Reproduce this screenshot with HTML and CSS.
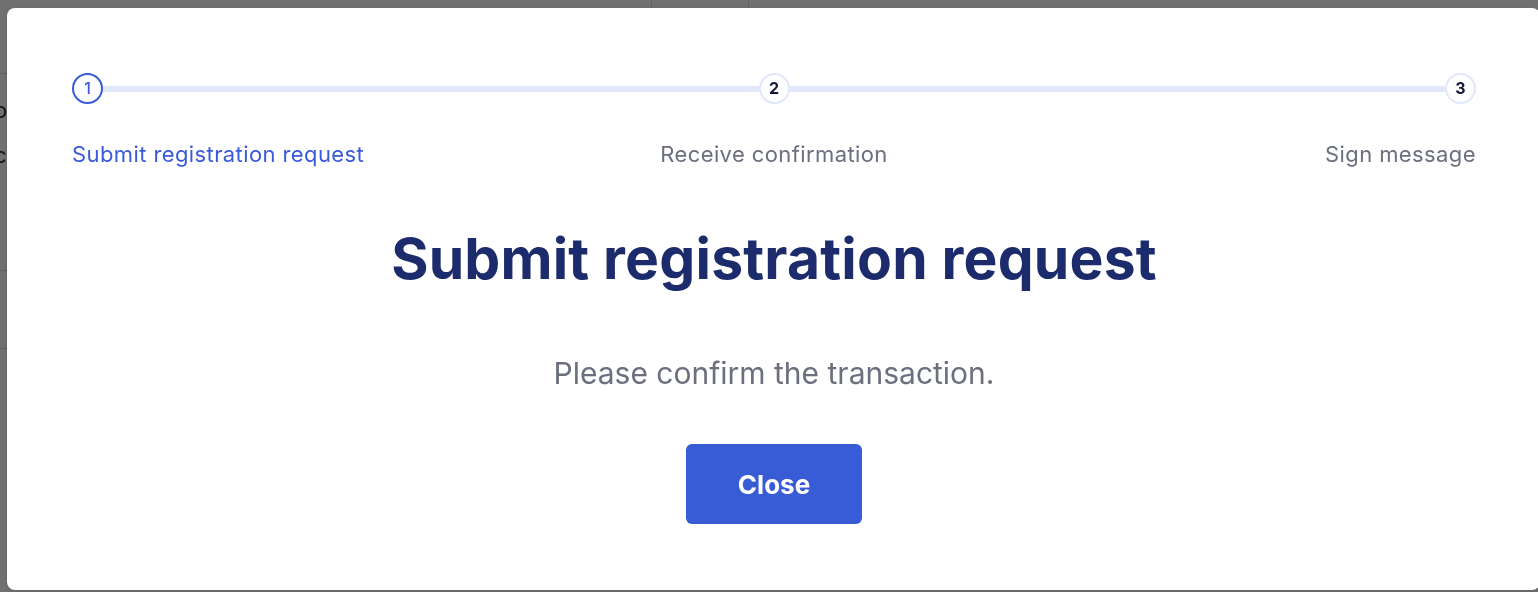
FILE: index.html
```html
<!DOCTYPE html>
<html lang="en">
<head>
    <meta charset="UTF-8">
    <meta name="viewport" content="width=device-width, initial-scale=1.0">
    <title>Register</title>
    <link rel="stylesheet" href="styles.css">
</head>
<body>

    <!-- Halaman di belakang overlay -->
    <div class="page">
        <div class="page-top">
            <span class="page-col"></span>
            <span class="page-col"></span>
        </div>
        <div class="page-row row-1">
            <span class="ghost">o</span>
            <span class="ghost">c</span>
        </div>
        <div class="page-row row-2"></div>
    </div>

    <div class="overlay"></div>

    <!-- Modal registrasi -->
    <div class="modal">
        <div class="stepper">
            <div class="track">
                <div class="step step-active">1</div>
                <div class="step">2</div>
                <div class="step">3</div>
            </div>
            <div class="labels">
                <span class="label label-active">Submit registration request</span>
                <span class="label">Receive confirmation</span>
                <span class="label">Sign message</span>
            </div>
        </div>

        <h1>Submit registration request</h1>
        <p class="info">Please confirm the transaction.</p>
        <button type="button" class="btn-close">Close</button>
    </div>

</body>
</html>
```

FILE: styles.css
```css
body {
    font-family: "Inter", "Noto Sans", sans-serif;
    margin: 0;
    padding: 0;
    background-color: #fff;
    overflow: hidden;
    height: 592px;
}

/* Halaman di belakang */
.page {
    height: 592px;
}

.page-top {
    display: flex;
    height: 73px;
    border-bottom: 1px solid #d8d8d8;
    padding-left: 651px;
}

.page-col {
    width: 96px;
    border-left: 1px solid #ddd;
}

.page-row {
    border-bottom: 1px solid #d8d8d8;
    font-size: 22px;
    color: #333;
}

.row-1 {
    height: 197px;
    padding-top: 14px;
    box-sizing: border-box;
}

.row-2 {
    height: 77px;
}

.ghost {
    display: block;
    margin-left: -6px;
    line-height: 45px;
}

.overlay {
    position: fixed;
    inset: 0;
    background-color: rgba(0, 0, 0, 0.56);
}

/* Modal */
.modal {
    position: fixed;
    top: 8px;
    left: 7px;
    width: 1533px;
    height: 582px;
    box-sizing: border-box;
    background-color: #fff;
    border-radius: 8px;
    padding: 65px 64px 0 65px;
    text-align: center;
    box-shadow: 0 1px 4px rgba(0, 0, 0, 0.15);
}

.track {
    position: relative;
    display: flex;
    justify-content: space-between;
    align-items: center;
    height: 31px;
}

.track::before {
    content: "";
    position: absolute;
    left: 16px;
    right: 16px;
    top: 13px;
    height: 6px;
    background-color: #e1e8fc;
}

.step {
    position: relative;
    width: 27px;
    height: 27px;
    border: 2px solid #e1e8fc;
    border-radius: 50%;
    background-color: #fff;
    color: #121a3a;
    font-size: 16px;
    font-weight: 700;
    line-height: 27px;
    text-align: center;
}

.step-active {
    border-color: #3a5bd9;
    color: #3a5bd9;
    font-weight: 500;
}

/* Label langkah: kiri, tengah, kanan */
.labels {
    display: grid;
    grid-template-columns: 1fr auto 1fr;
    margin-top: 36px;
}

.label {
    font-size: 22px;
    letter-spacing: 0.4px;
    color: #6b6f7e;
    line-height: 28px;
    white-space: nowrap;
}

.label:first-child {
    text-align: left;
}

.label:last-child {
    text-align: right;
}

.label-active {
    color: #3a5bd9;
}

h1 {
    margin: 57px 0 0;
    font-size: 57px;
    font-weight: 700;
    color: #1c2b6b;
    letter-spacing: 0.2px;
    line-height: 68px;
}

.info {
    margin: 62px 0 0;
    font-size: 30px;
    color: #6b6f7e;
    line-height: 36px;
}

.btn-close {
    margin-top: 53px;
    width: 176px;
    height: 80px;
    background-color: #385bd6;
    color: #fff;
    border: none;
    border-radius: 6px;
    font-family: inherit;
    font-size: 26px;
    font-weight: 700;
    cursor: pointer;
}
```
